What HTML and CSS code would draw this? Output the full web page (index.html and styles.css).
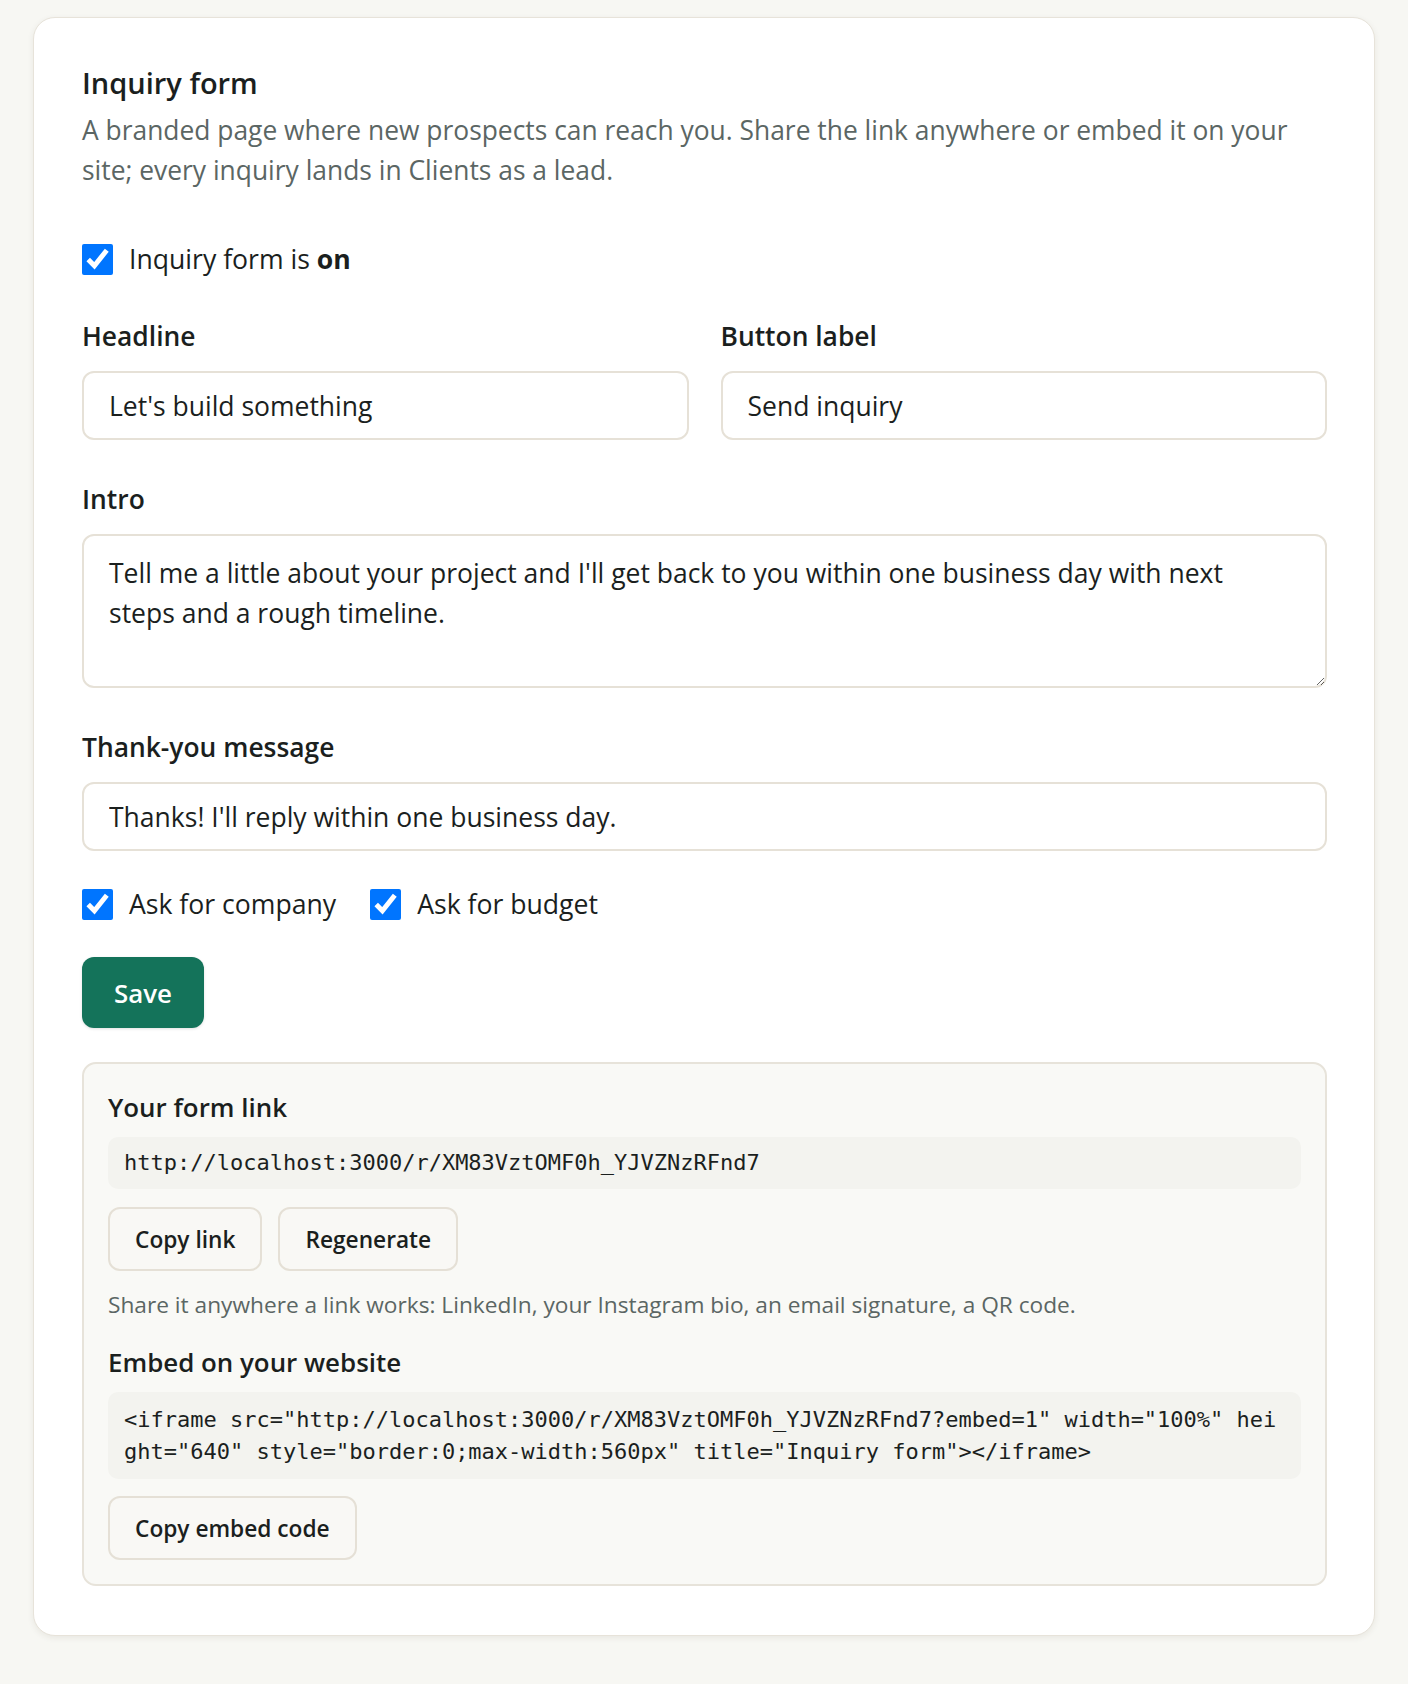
FILE: index.html
```html
<!DOCTYPE html>
<html lang="en">
<head>
    <meta charset="UTF-8">
    <meta name="viewport" content="width=device-width, initial-scale=1.0">
    <title>Inquiry form</title>
    <link rel="stylesheet" href="styles.css">
</head>
<body>
    <div class="card">
        <h1>Inquiry form</h1>
        <p class="lead">A branded page where new prospects can reach you. Share the link anywhere or embed it on your site; every inquiry lands in Clients as a lead.</p>

        <form id="inquiryForm">
            <label class="check">
                <input type="checkbox" checked>
                <span>Inquiry form is <strong>on</strong></span>
            </label>

            <div class="row">
                <div class="field">
                    <label for="headline">Headline</label>
                    <input type="text" id="headline" value="Let's build something">
                </div>
                <div class="field">
                    <label for="buttonLabel">Button label</label>
                    <input type="text" id="buttonLabel" value="Send inquiry">
                </div>
            </div>

            <div class="field">
                <label for="intro">Intro</label>
                <textarea id="intro" rows="3">Tell me a little about your project and I'll get back to you within one business day with next steps and a rough timeline.</textarea>
            </div>

            <div class="field">
                <label for="thanks">Thank-you message</label>
                <input type="text" id="thanks" value="Thanks! I'll reply within one business day.">
            </div>

            <div class="checks">
                <label class="check">
                    <input type="checkbox" checked>
                    <span>Ask for company</span>
                </label>
                <label class="check">
                    <input type="checkbox" checked>
                    <span>Ask for budget</span>
                </label>
            </div>

            <div>
                <button type="submit" class="primary">Save</button>
            </div>
        </form>

        <div class="share">
            <h2>Your form link</h2>
            <pre class="code">http://localhost:3000/r/XM83VztOMF0h_YJVZNzRFnd7</pre>
            <div class="actions">
                <button type="button" class="secondary">Copy link</button>
                <button type="button" class="secondary">Regenerate</button>
            </div>
            <p class="hint">Share it anywhere a link works: LinkedIn, your Instagram bio, an email signature, a QR code.</p>

            <h2>Embed on your website</h2>
            <pre class="code embed">&lt;iframe src="http://localhost:3000/r/XM83VztOMF0h_YJVZNzRFnd7?embed=1" width="100%" height="640" style="border:0;max-width:560px" title="Inquiry form"&gt;&lt;/iframe&gt;</pre>
            <div class="actions">
                <button type="button" class="secondary">Copy embed code</button>
            </div>
        </div>
    </div>
</body>
</html>
```

FILE: styles.css
```css
/* Base */
* {
    box-sizing: border-box;
    margin: 0;
    padding: 0;
}

body {
    background-color: #f7f7f3;
    font-family: "Open Sans", "Noto Sans", sans-serif;
    font-size: 26px;
    color: #1b1f1e;
    padding: 17px 33px 49px;
}

/* Card */
.card {
    background-color: #fff;
    border: 1px solid #e7e3da;
    border-radius: 22px;
    box-shadow: 0 2px 6px rgba(60, 50, 30, 0.08);
    padding: 47px 47px 49px 48px;
}

h1 {
    font-size: 29px;
    font-weight: 600;
    line-height: 36px;
}

.lead {
    color: #5b6664;
    font-size: 26.4px;
    line-height: 40px;
    margin-top: 9px;
}

/* Form */
form {
    display: flex;
    flex-direction: column;
    gap: 36px;
    margin-top: 52px;
}

.row {
    margin-top: 8px;
}

form > .field {
    margin-top: 7px;
}

.row {
    display: grid;
    grid-template-columns: 1fr 1fr;
    gap: 32px;
}

.field {
    display: flex;
    flex-direction: column;
    gap: 19px;
}

.field label {
    font-weight: 600;
    font-size: 26.4px;
    line-height: 32px;
}

input[type="text"],
textarea {
    font-family: inherit;
    font-size: 26.5px;
    color: #1b1f1e;
    border: 2px solid #e6e1d7;
    border-radius: 12px;
    padding: 0 25px;
    background-color: #fff;
}

input[type="text"] {
    height: 69px;
}

textarea {
    height: 154px;
    padding: 17px 34px 0 25px;
    line-height: 40px;
    resize: vertical;
}

.check {
    display: flex;
    align-items: center;
    gap: 16px;
    font-size: 26.6px;
    line-height: 34px;
}

.check input {
    width: 31px;
    height: 31px;
    margin: 0;
}

.checks {
    display: flex;
    gap: 34px;
}

/* Buttons */
button {
    font-family: inherit;
    font-weight: 600;
    cursor: pointer;
    border-radius: 12px;
}

.primary {
    background-color: #14735a;
    color: #fff;
    border: none;
    font-size: 25.9px;
    height: 71px;
    padding: 0 32px;
    box-shadow: 0 1px 3px rgba(0, 0, 0, 0.12);
}

.secondary {
    background-color: #f9f8f5;
    color: #1b1f1e;
    border: 2px solid #e5e0d6;
    font-size: 22.7px;
    height: 64px;
    padding: 0 25px;
}

/* Share box */
.share {
    margin-top: 34px;
    background-color: #f9f9f6;
    border: 2px solid #e7e3da;
    border-radius: 14px;
    padding: 26px 24px 24px;
}

.share h2 {
    font-size: 25.9px;
    font-weight: 600;
    line-height: 34px;
}

.share h2 + .code {
    margin-top: 13px;
}

.code {
    background-color: #f3f3ef;
    border-radius: 10px;
    padding: 10px 16px;
    font-family: "DejaVu Sans Mono", monospace;
    font-size: 22px;
    line-height: 32px;
    white-space: pre-wrap;
    word-break: break-all;
}

.code.embed {
    padding: 12px 16px 11px;
}

.actions {
    display: flex;
    gap: 16px;
    margin-top: 18px;
}

.embed + .actions {
    margin-top: 17px;
}

.hint {
    color: #5b6664;
    font-size: 22.7px;
    line-height: 32px;
    margin: 18px 0 24px;
}
```
